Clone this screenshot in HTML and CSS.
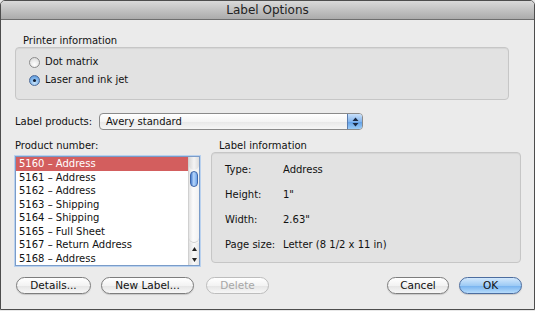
FILE: index.html
```html
<!DOCTYPE html>
<html>
<head>
<meta charset="utf-8">
<link rel="stylesheet" href="styles.css">
</head>
<body>
<div class="window">
  <div class="titlebar">Label Options</div>
  <div class="content">
    <div class="section-title">Printer information</div>
    <div class="groupbox printer-box">
      <div class="radio"><span class="radio-circle"></span>Dot matrix</div>
      <div class="radio"><span class="radio-circle checked"></span>Laser and ink jet</div>
    </div>
    <div class="products-row">
      <span class="products-label">Label products:</span>
      <div class="popup">
        <span class="popup-text">Avery standard</span>
        <span class="popup-arrows">
          <svg width="7" height="10" viewBox="0 0 7 10"><path d="M3.5 0.5 L6.5 4 L0.5 4 Z M3.5 9.5 L6.5 6 L0.5 6 Z" fill="#1c2a44"/></svg>
        </span>
      </div>
    </div>
    <div class="columns">
      <div class="col-left">
        <div class="section-title">Product number:</div>
        <div class="listbox">
          <div class="list-items">
            <div class="list-row selected">5160 – Address</div>
            <div class="list-row">5161 – Address</div>
            <div class="list-row">5162 – Address</div>
            <div class="list-row">5163 – Shipping</div>
            <div class="list-row">5164 – Shipping</div>
            <div class="list-row">5165 – Full Sheet</div>
            <div class="list-row">5167 – Return Address</div>
            <div class="list-row">5168 – Address</div>
          </div>
          <div class="scrollbar">
            <div class="scroll-cap"></div>
            <div class="scroll-thumb"></div>
            <div class="scroll-track"></div>
            <div class="scroll-arrow"><svg width="5" height="4" viewBox="0 0 5 4"><path d="M2.5 0 L5 4 L0 4 Z" fill="#222"/></svg></div>
            <div class="scroll-arrow"><svg width="5" height="4" viewBox="0 0 5 4"><path d="M0 0 L5 0 L2.5 4 Z" fill="#222"/></svg></div>
          </div>
        </div>
      </div>
      <div class="col-right">
        <div class="section-title">Label information</div>
        <div class="groupbox info-box">
          <div class="info-row"><span class="info-key">Type:</span><span>Address</span></div>
          <div class="info-row"><span class="info-key">Height:</span><span>1"</span></div>
          <div class="info-row"><span class="info-key">Width:</span><span>2.63"</span></div>
          <div class="info-row"><span class="info-key">Page size:</span><span>Letter (8 1/2 x 11 in)</span></div>
        </div>
      </div>
    </div>
    <div class="buttons">
      <div class="btn btn-details">Details...</div>
      <div class="btn btn-new">New Label...</div>
      <div class="btn btn-delete disabled">Delete</div>
      <div class="spacer"></div>
      <div class="btn btn-cancel">Cancel</div>
      <div class="btn btn-ok default">OK</div>
    </div>
  </div>
</div>
</body>
</html>
```

FILE: styles.css
```css
* { box-sizing: border-box; }
html, body {
  margin: 0;
  padding: 0;
  background: #e8e8e8;
}
body {
  width: 535px;
  height: 311px;
  overflow: hidden;
  font-family: "DejaVu Sans", "Noto Sans", sans-serif;
  font-size: 10px;
  color: #111111;
}
.window {
  width: 535px;
  height: 310px;
  border: 1px solid #4d4d4d;
  border-radius: 5px 5px 0 0;
  background: #ebebeb;
  display: flex;
  flex-direction: column;
  overflow: hidden;
}
.titlebar {
  height: 19px;
  flex: none;
  background: linear-gradient(#d9d9d9, #ababab);
  border-bottom: 1px solid #6e6e6e;
  text-align: center;
  font-size: 12px;
  line-height: 19px;
  color: #222222;
}
.content {
  flex: 1;
  padding: 15px 13px 0 14px;
  display: flex;
  flex-direction: column;
}
.section-title {
  height: 12px;
  line-height: 12px;
  margin-left: 8px;
}
.groupbox {
  background: #e2e2e2;
  border: 1px solid #c6c6c6;
  border-radius: 4px;
  box-shadow: inset 0 1px 1px rgba(0,0,0,0.06);
}
.printer-box {
  margin-right: 12px;
  height: 53px;
  padding: 7px 0 0 13px;
  display: flex;
  flex-direction: column;
  gap: 4px;
}
.radio {
  height: 14px;
  line-height: 14px;
  display: flex;
  align-items: center;
}
.radio-circle {
  width: 11px;
  height: 11px;
  border-radius: 50%;
  border: 1px solid #8c8c8c;
  background: radial-gradient(circle at 50% 70%, #ffffff 0%, #e6e6e6 60%, #cfcfcf 100%);
  margin-right: 5px;
  position: relative;
  flex: none;
}
.radio-circle.checked {
  border-color: #4b6a99;
  background: radial-gradient(circle at 50% 75%, #c8e4fb 0%, #7fb4ea 55%, #4d8ad3 100%);
}
.radio-circle.checked::after {
  content: "";
  position: absolute;
  left: 3px;
  top: 3px;
  width: 3px;
  height: 3px;
  border-radius: 50%;
  background: #0e1a2e;
}
.products-row {
  margin-top: 13px;
  display: flex;
  align-items: center;
  height: 17px;
}
.products-label {
  width: 84px;
  flex: none;
}
.popup {
  width: 264px;
  height: 17px;
  border: 1px solid #8a8a8a;
  border-radius: 4px;
  background: linear-gradient(#ffffff, #f4f4f4 50%, #e7e7e7 51%, #f6f6f6);
  display: flex;
  align-items: center;
  overflow: hidden;
}
.popup-text {
  flex: 1;
  padding-left: 6px;
}
.popup-arrows {
  width: 15px;
  height: 15px;
  background: linear-gradient(#c9e0fa, #85b6ee 50%, #5e9de6 51%, #9bccf7);
  border-left: 1px solid #5a7cae;
  display: flex;
  align-items: center;
  justify-content: center;
}
.columns {
  margin-top: 10px;
  display: flex;
  gap: 11px;
  align-items: flex-start;
}
.col-left {
  width: 185px;
  flex: none;
}
.col-left .section-title {
  margin-left: 0;
  margin-bottom: 4px;
}
.listbox {
  height: 110px;
  border: 1px solid #7a9cc9;
  box-shadow: 0 0 0 1px #b9d1ee;
  background: #ffffff;
  display: flex;
}
.list-items {
  flex: 1;
}
.list-row {
  height: 13.5px;
  line-height: 13.5px;
  padding-left: 3px;
  font-size: 10px;
  white-space: nowrap;
}
.list-row.selected {
  background: #d35e5e;
  color: #ffffff;
}
.scrollbar {
  width: 11px;
  flex: none;
  display: flex;
  flex-direction: column;
  background: linear-gradient(90deg, #e4e4e4, #fbfbfb 40%, #f1f1f1);
  border-left: 1px solid #d0d0d0;
}
.scroll-cap {
  height: 13px;
  border-radius: 0 0 5px 5px;
  background: linear-gradient(90deg, #d8d8d8, #f4f4f4 50%, #dcdcdc);
}
.scroll-thumb {
  height: 16px;
  margin: 1px 1px;
  border-radius: 5px;
  border: 1px solid #3e66a8;
  background: linear-gradient(90deg, #4a7fd0, #b6d6fb 45%, #6ea4ea);
}
.scroll-track {
  flex: 1;
  border-bottom: 1px solid #cccccc;
  border-radius: 0 0 5px 5px;
}
.scroll-arrow {
  height: 11px;
  display: flex;
  align-items: center;
  justify-content: center;
  background: linear-gradient(90deg, #e0e0e0, #fafafa 50%, #e6e6e6);
}
.col-right {
  flex: 1;
}
.info-box {
  height: 111px;
  padding: 10px 0 0 13px;
  display: flex;
  flex-direction: column;
  gap: 11px;
}
.info-row {
  height: 14px;
  line-height: 14px;
  display: flex;
}
.info-key {
  width: 58px;
  flex: none;
}
.buttons {
  margin-top: 11px;
  display: flex;
  height: 17px;
}
.btn {
  height: 17px;
  border: 1px solid #7d7d7d;
  border-radius: 9px;
  background: linear-gradient(#ffffff, #f3f3f3 50%, #e4e4e4 51%, #f7f7f7);
  text-align: center;
  line-height: 15px;
  font-size: 10.5px;
  box-shadow: 0 1px 1px rgba(0,0,0,0.15);
}
.btn-details { width: 75px; margin-left: 1px; }
.btn-new { width: 93px; margin-left: 10px; }
.btn-delete { width: 63px; margin-left: 12px; }
.btn.disabled {
  color: #a6a6a6;
  border-color: #bdbdbd;
  box-shadow: none;
}
.spacer { flex: 1; }
.btn-cancel { width: 62px; }
.btn-ok { width: 63px; margin-left: 10px; margin-right: -1px; }
.btn.default {
  border-color: #4c6d9f;
  background: linear-gradient(#d3e8fc, #9ecbf5 50%, #74b1ef 51%, #b7dcfb);
}
```
